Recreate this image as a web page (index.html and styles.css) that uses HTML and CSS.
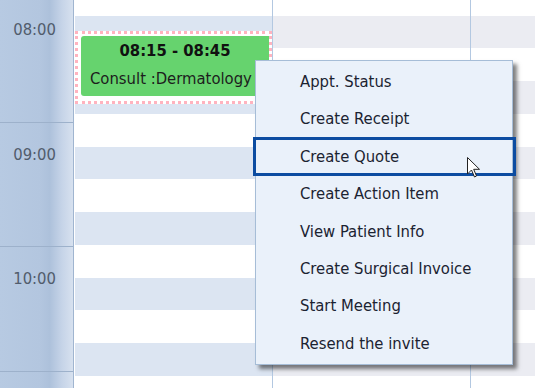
FILE: index.html
```html
<!DOCTYPE html>
<html lang="en">
<head>
    <meta charset="UTF-8">
    <meta name="viewport" content="width=device-width, initial-scale=1.0">
    <title>Scheduler - Day View</title>
    <link rel="stylesheet" href="styles.css">
</head>
<body>
    <div class="scheduler">
        <div class="time-col">
            <div class="hour"><span>08:00</span></div>
            <div class="hour"><span>09:00</span></div>
            <div class="hour"><span>10:00</span></div>
        </div>

        <div class="day-col selected">
            <div class="slot first"></div>
            <div class="slot alt"></div><div class="slot"></div>
            <div class="slot alt"></div><div class="slot"></div>
            <div class="slot alt"></div><div class="slot"></div>
            <div class="slot alt"></div><div class="slot"></div>
            <div class="slot alt"></div><div class="slot"></div>
            <div class="slot alt"></div><div class="slot"></div>

            <div class="appt">
                <div class="appt-body">
                    <div class="appt-time">08:15 - 08:45</div>
                    <div class="appt-title">Consult :Dermatology</div>
                </div>
            </div>
        </div>

        <div class="day-col">
            <div class="slot first"></div>
            <div class="slot alt"></div><div class="slot"></div>
            <div class="slot alt"></div><div class="slot"></div>
            <div class="slot alt"></div><div class="slot"></div>
            <div class="slot alt"></div><div class="slot"></div>
            <div class="slot alt"></div><div class="slot"></div>
            <div class="slot alt"></div><div class="slot"></div>
        </div>

        <div class="day-col last">
            <div class="slot first"></div>
            <div class="slot alt"></div><div class="slot"></div>
            <div class="slot alt"></div><div class="slot"></div>
            <div class="slot alt"></div><div class="slot"></div>
            <div class="slot alt"></div><div class="slot"></div>
            <div class="slot alt"></div><div class="slot"></div>
            <div class="slot alt"></div><div class="slot"></div>
        </div>

        <ul class="context-menu">
            <li class="menu-item">Appt. Status</li>
            <li class="menu-item">Create Receipt</li>
            <li class="menu-item hover">Create Quote</li>
            <li class="menu-item">Create Action Item</li>
            <li class="menu-item">View Patient Info</li>
            <li class="menu-item">Create Surgical Invoice</li>
            <li class="menu-item">Start Meeting</li>
            <li class="menu-item">Resend the invite</li>
        </ul>

        <svg class="cursor" width="14" height="21" viewBox="0 0 14 21">
            <path d="M0.5 0.5 L0.5 17 L4.5 13 L7.5 20 L9.5 19 L6.7 12.3 L12.5 12.3 Z" fill="#fff" stroke="#222" stroke-width="1"/>
        </svg>
    </div>
</body>
</html>
```

FILE: styles.css
```css
body {
    margin: 0;
    font-family: "DejaVu Sans Condensed", "DejaVu Sans", sans-serif;
    font-stretch: condensed;
    font-size: 16.5px;
    background-color: #fff;
    overflow: hidden;
}
.scheduler {
    position: relative;
    display: flex;
    width: 535px;
    height: 388px;
    overflow: hidden;
}
.time-col {
    width: 73px;
    flex: none;
    border-right: 1px solid #a0b5d0;
    background: linear-gradient(to right, #b7cae2 0%, #b3c6df 55%, #adc1db 68%, #c6d4e8 85%, #d7e1ef 100%);
    color: #515c6c;
}
.hour {
    height: 124.7px;
    box-sizing: border-box;
    border-bottom: 1px solid #9db1cb;
    padding: 22px 17px 0 0;
    text-align: right;
    line-height: 20px;
}
.hour:first-child {
    margin-top: -2px;
}
.day-col {
    position: relative;
    display: flex;
    flex-direction: column;
    width: 197px;
    flex: none;
    border-left: 1px solid #fff;
    border-right: 1px solid #b3c8e1;
}
.day-col + .day-col {
    border-left: none;
}
.day-col.last {
    flex: 1;
    border-right: none;
}
.slot {
    height: 33px;
    flex: none;
}
.slot.first {
    height: 15.7px;
}
.slot.alt {
    height: 32.5px;
    background-color: #ebecf2;
}
.selected .slot.alt {
    background-color: #dce5f2;
}
.appt {
    position: absolute;
    left: 0;
    right: 0;
    top: 31px;
    height: 73px;
    box-sizing: border-box;
    border: 3px dotted #ffb3bf;
    background-color: #fff;
    padding: 2px 0 0 3px;
}
.appt-body {
    height: 60px;
    background-color: #66d36e;
    border-radius: 3px 0 0 3px;
    color: #111;
}
.appt-time {
    font-weight: bold;
    text-align: center;
    padding-top: 4px;
    line-height: 22px;
}
.appt-title {
    padding: 6px 0 0 9px;
    line-height: 22px;
    color: #1d1d1d;
}
.context-menu {
    position: absolute;
    left: 255px;
    top: 60px;
    width: 256px;
    margin: 0;
    padding: 2px 0;
    list-style: none;
    background-color: #eaf1fa;
    border: 1px solid #a6bdd7;
    box-shadow: 4px 4px 4px rgba(0,0,0,0.5);
    color: #1b2331;
}
.menu-item {
    position: relative;
    height: 37.4px;
    line-height: 37.4px;
    padding-left: 44px;
}
.menu-item.hover::after {
    content: "";
    position: absolute;
    left: -3px;
    right: -4px;
    top: -1px;
    bottom: -1px;
    border: 3px solid #0c4ca1;
}
.cursor {
    position: absolute;
    left: 467px;
    top: 157px;
}
```
